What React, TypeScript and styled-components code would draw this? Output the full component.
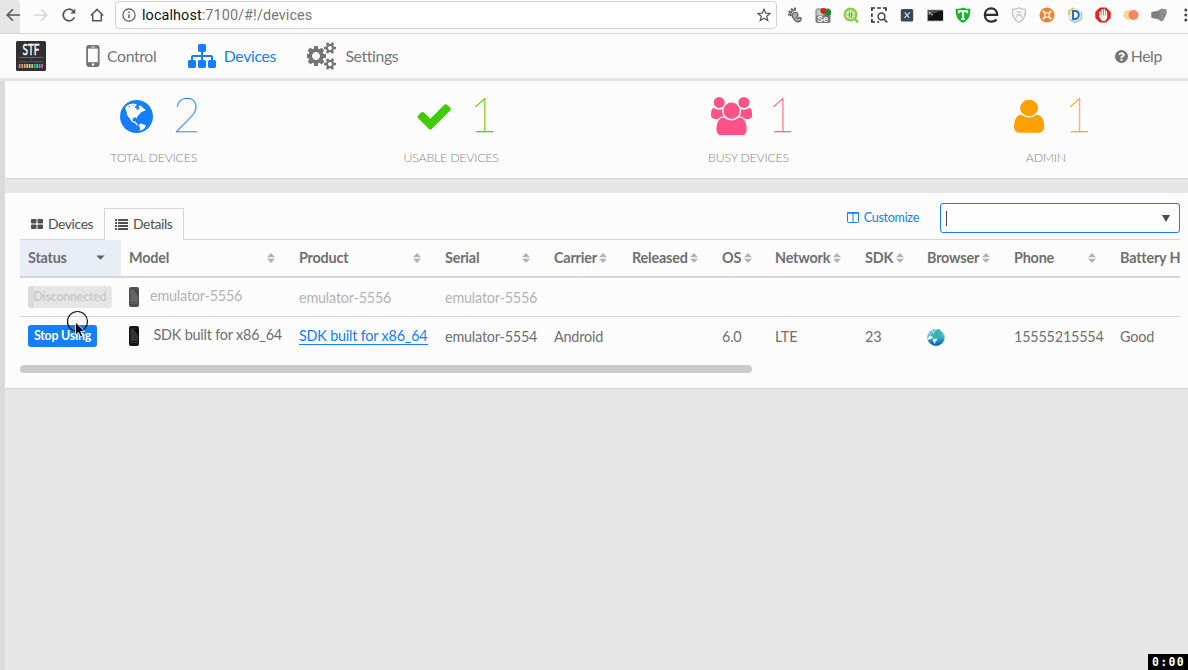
import React from "react";
import styled, { createGlobalStyle } from "styled-components";

const GlobalStyle = createGlobalStyle`
  * { box-sizing: border-box; }
  body { margin: 0; background: #e6e6e6; overflow: hidden; }
  svg { display: block; flex: none; }
`;

const BLUE = "#157efb";

const Page = styled.div`
  position: relative;
  width: 1188px;
  height: 670px;
  overflow: hidden;
  display: flex;
  flex-direction: column;
  background: #e6e6e6;
  color: #6f6f6f;
  font-family: Lato, "Liberation Sans", sans-serif;
  font-size: 14.4px;
`;

/* ---------- browser bar ---------- */
const BrowserBar = styled.div`
  display: flex;
  height: 34px;
  flex: none;
  align-items: flex-start;
  background: #fcfcfc;
  border-bottom: 1px solid #d6d6d6;
`;
const BackButton = styled.div`
  flex: none;
  width: 20px;
  height: 33px;
  padding: 7px 0 0 5px;
  background: #e6e6e6;
  border-top-right-radius: 4px;
  overflow: hidden;
`;
const BarIcon = styled.div<{ $w: number }>`
  flex: none;
  width: ${(p) => p.$w}px;
  padding-top: 7px;
  display: flex;
  justify-content: center;
`;
const AddressField = styled.div`
  flex: none;
  display: flex;
  align-items: center;
  width: 662px;
  height: 28px;
  margin: 1px 9px 0 0;
  padding: 0 5px 0 6px;
  border: 1px solid #d2d2d2;
  border-radius: 4px;
  background: #fff;
  font-family: Roboto, "Liberation Sans", sans-serif;
  font-size: 14.4px;
  color: #767676;
`;
const Url = styled.span`
  flex: 1;
  margin-left: 6px;
  padding-top: 1px;
  letter-spacing: 0.1px;
`;
const Host = styled.span`
  color: #111;
`;
const Extensions = styled.div`
  display: flex;
  flex: none;
  padding-top: 6px;
  gap: 10px;
`;

/* ---------- navigation ---------- */
const NavBar = styled.nav`
  display: flex;
  align-items: center;
  height: 47px;
  flex: none;
  padding: 0 26px 0 16px;
  background: #fcfcfc;
  border-bottom: 3px solid #e4e4e4;
  font-size: 15.8px;
  letter-spacing: -0.36px;
`;
const Logo = styled.div`
  width: 30px;
  height: 30px;
  margin-right: 40px;
`;
const NavItem = styled.a<{ $active?: boolean; $gap: number; $after?: number }>`
  display: flex;
  align-items: center;
  gap: ${(p) => p.$gap}px;
  margin-right: ${(p) => p.$after ?? 0}px;
  color: ${(p) => (p.$active ? BLUE : "#757575")};
`;
const NavText = styled.span`
  padding-bottom: 2px;
`;
const Spacer = styled.div`
  flex: 1;
`;

/* ---------- content ---------- */
const Content = styled.main`
  flex: 1;
  border-left: 5px solid #dadada;
`;
const StatsPanel = styled.section`
  display: flex;
  height: 98px;
  background: #fcfcfc;
  border-bottom: 1px solid #d6d6d6;
`;
const Stat = styled.div`
  width: 297.4px;
  flex: none;
  display: flex;
  flex-direction: column;
  align-items: center;
`;
const StatTop = styled.div<{ $color: string; $gap: number; $shift: number }>`
  display: flex;
  align-items: center;
  height: 70px;
  gap: ${(p) => p.$gap}px;
  margin-left: ${(p) => p.$shift}px;
  color: ${(p) => p.$color};
`;
const StatNumber = styled.span`
  font-size: 48px;
  line-height: 66px;
  height: 70px;
  font-weight: 100;
  -webkit-text-stroke: 0.3px currentColor;
`;
const StatLabel = styled.div`
  font-size: 12.4px;
  letter-spacing: -0.24px;
  line-height: 14px;
  font-weight: 300;
  color: #858585;
`;

const DevicesPanel = styled.section`
  height: 196px;
  margin-top: 14px;
  padding: 10px 8px 0 15px;
  background: #fcfcfc;
  border-bottom: 1px solid #d6d6d6;
`;
const Toolbar = styled.div`
  display: flex;
  height: 37px;
  border-bottom: 1px solid #d6d6d6;
`;
const Tab = styled.div<{ $active?: boolean; $w: number }>`
  display: flex;
  align-items: center;
  gap: 5px;
  width: ${(p) => p.$w}px;
  height: 32px;
  margin-top: 5px;
  padding: 0 0 1px 10px;
  font-size: 13.9px;
  letter-spacing: -0.4px;
  color: #4f4f4f;
  border: ${(p) => (p.$active ? "1px solid #d6d6d6" : "1px solid transparent")};
  border-bottom: none;
  background: ${(p) => (p.$active ? "#fcfcfc" : "transparent")};
`;
const Customize = styled.div`
  display: flex;
  align-items: center;
  gap: 5px;
  height: 29px;
  margin-right: 21px;
  font-size: 12.6px;
  letter-spacing: -0.3px;
  color: ${BLUE};
`;
const Search = styled.div`
  display: flex;
  align-items: center;
  justify-content: space-between;
  width: 240px;
  height: 30px;
  padding: 0 9px 0 5px;
  border: 1px solid ${BLUE};
  border-radius: 3px;
  background: #fdfdfd;
`;
const Caret = styled.span`
  width: 1px;
  height: 15px;
  background: #444;
`;
const Table = styled.table`
  width: 1160px;
  table-layout: fixed;
  border-collapse: separate;
  border-spacing: 0;
  letter-spacing: -0.2px;
`;
const Th = styled.th<{ $sorted?: boolean }>`
  height: 38px;
  padding: 0 0 1px 8px;
  border-bottom: 2px solid #d6d6d6;
  background: ${(p) => (p.$sorted ? "#e9edf6" : "transparent")};
  text-align: left;
  font-weight: 700;
  color: #6f6f6f;
  white-space: nowrap;
`;
const ThInner = styled.div<{ $tight?: boolean }>`
  display: flex;
  align-items: center;
  justify-content: ${(p) => (p.$tight ? "flex-start" : "space-between")};
  gap: 2.5px;
  padding-right: ${(p) => (p.$tight ? 0 : 16)}px;
`;
const Row = styled.tr<{ $muted?: boolean }>`
  color: ${(p) => (p.$muted ? "#b3b3b3" : "#6f6f6f")};
`;
const Td = styled.td<{ $line?: boolean; $lift?: number }>`
  height: 39px;
  padding: 0 0 ${(p) => p.$lift ?? 1}px 8px;
  white-space: nowrap;
  border-bottom: ${(p) => (p.$line ? "1px solid #d6d6d6" : "none")};
`;
const StatusButton = styled.span<{ $muted?: boolean }>`
  display: block;
  width: ${(p) => (p.$muted ? 84 : 69)}px;
  height: 22px;
  line-height: 22px;
  border-radius: 3px;
  text-align: center;
  font-size: 12.4px;
  letter-spacing: -0.22px;
  font-weight: 700;
  color: ${(p) => (p.$muted ? "#cbcbcb" : "#fff")};
  background: ${(p) => (p.$muted ? "linear-gradient(90deg, #dadada 6px, #e6e6e6 6px)" : BLUE)};
`;
const ModelCell = styled.div<{ $gap: number }>`
  display: flex;
  align-items: center;
  gap: ${(p) => p.$gap}px;
`;
const ModelName = styled.span`
  padding-bottom: 3px;
`;
const ProductLink = styled.a`
  display: inline-block;
  line-height: 16px;
  color: ${BLUE};
  border-bottom: 1px solid ${BLUE};
`;
const ScrollThumb = styled.div`
  width: 732px;
  height: 8px;
  margin-top: 9px;
  border-radius: 4px;
  background: #cbcbcb;
`;
const Timer = styled.div`
  position: absolute;
  right: 0;
  bottom: 0;
  width: 40px;
  height: 16px;
  background: #000;
  color: #fff;
  font: 700 11.5px/16px "DejaVu Sans Mono", monospace;
  letter-spacing: 1.3px;
  padding-left: 4px;
`;
const Pointer = styled.div`
  position: absolute;
  left: 66px;
  top: 310px;
`;

/* ---------- icons ---------- */
const FaIcon = ({ d, h, w = 1792, stretch = 1 }: { d: string; h: number; w?: number; stretch?: number }) => (
  <svg width={((h * w) / 1792) * stretch} height={h} viewBox={`0 0 ${w} 1792`} preserveAspectRatio="none" fill="currentColor">
    <path d={d} />
  </svg>
);

const SITEMAP =
  "M1792 1248v320q0 40-28 68t-68 28h-320q-40 0-68-28t-28-68v-320q0-40 28-68t68-28h96v-192h-512v192h96q40 0 68 28t28 68v320q0 40-28 68t-68 28h-320q-40 0-68-28t-28-68v-320q0-40 28-68t68-28h96v-192h-512v192h96q40 0 68 28t28 68v320q0 40-28 68t-68 28h-320q-40 0-68-28t-28-68v-320q0-40 28-68t68-28h96v-192q0-52 38-90t90-38h512v-192h-96q-40 0-68-28t-28-68v-320q0-40 28-68t68-28h320q40 0 68 28t28 68v320q0 40-28 68t-68 28h-96v192h512q52 0 90 38t38 90v192h96q40 0 68 28t28 68z";
const CHECK =
  "M1671 566q0 40-28 68l-724 724-136 136q-28 28-68 28t-68-28l-136-136-362-362q-28-28-28-68t28-68l136-136q28-28 68-28t68 28l294 295 656-657q28-28 68-28t68 28l136 136q28 28 28 68z";
const USER =
  "M1536 1399q0 109-62.5 187t-150.5 78h-854q-88 0-150.5-78t-62.5-187q0-85 8.5-160.5t31.5-152 58.5-131 94-89 134.5-34.5q131 128 313 128t313-128q76 0 134.5 34.5t94 89 58.5 131 31.5 152 8.5 160.5zm-256-887q0 159-112.5 271.5t-271.5 112.5-271.5-112.5-112.5-271.5 112.5-271.5 271.5-112.5 271.5 112.5 112.5 271.5z";
const USERS =
  "M593 896q-162 5-265 128H194q-82 0-138-40.5T0 865q0-353 124-353 6 0 43.5 21t97.5 42.5T384 597q67 0 133-23-5 37-5 66 0 139 81 256zm1071 637q0 120-73 189.5t-194 69.5H523q-121 0-194-69.5T256 1533q0-53 3.5-103.5t14-109T300 1212t43-97.5 62-81 85.5-53.5T602 960q10 0 43 21.5t73 48 107 48 135 21.5 135-21.5 107-48 73-48 43-21.5q61 0 111.5 20t85.5 53.5 62 81 43 97.5 26.5 108.5 14 109 3.5 103.5zM640 256q0 106-75 181t-181 75-181-75-75-181 75-181T384 0t181 75 75 181zm704 384q0 159-112.5 271.5T960 1024 688.5 911.5 576 640t112.5-271.5T960 256t271.5 112.5T1344 640zm576 225q0 78-56 118.5t-138 40.5h-134q-103-123-265-128 81-117 81-256 0-29-5-66 66 23 133 23 59 0 119-21.5t97.5-42.5 43.5-21q124 0 124 353zm-128-609q0 106-75 181t-181 75-181-75-75-181 75-181 181-75 181 75 75 181z";
const HELP =
  "M1024 1376v-192q0-14-9-23t-23-9h-192q-14 0-23 9t-9 23v192q0 14 9 23t23 9h192q14 0 23-9t9-23zm256-672q0-88-55.5-163t-138.5-116-170-41q-243 0-371 213-15 24 8 42l132 100q7 6 19 6 16 0 25-12 53-68 86-92 34-24 86-24 48 0 85.5 26t37.5 59q0 38-20 61t-68 45q-63 28-115.5 86.5t-52.5 125.5v36q0 14 9 23t23 9h192q14 0 23-9t9-23q0-19 21.5-49.5t54.5-49.5q32-18 49-28.5t46-35 44.5-48 28-60.5 12.5-81zm384 192q0 209-103 385.5t-279.5 279.5-385.5 103-385.5-103-279.5-279.5-103-385.5 103-385.5 279.5-279.5 385.5-103 385.5 103 279.5 279.5 103 385.5z";
const COGS =
  "M832 896q0-106-75-181t-181-75-181 75-75 181 75 181 181 75 181-75 75-181zm768 512q0-52-38-90t-90-38-90 38-38 90q0 53 37.5 90.5t90.5 37.5 90.5-37.5 37.5-90.5zm0-1024q0-52-38-90t-90-38-90 38-38 90q0 53 37.5 90.5t90.5 37.5 90.5-37.5 37.5-90.5zm-384 421v185q0 10-7 19.5t-16 10.5l-155 24q-11 35-32 76 34 48 90 115 7 11 7 20 0 12-7 19-23 30-82.5 89.5t-78.5 59.5q-11 0-21-7l-115-90q-37 19-77 31-11 108-23 155-7 24-30 24h-186q-11 0-20-7.5t-10-17.5l-23-153q-34-10-75-31l-118 89q-7 7-20 7-11 0-21-8-144-133-144-160 0-9 7-19 10-14 41-53t47-61q-23-44-35-82l-152-24q-10-1-17-9.5t-7-19.5v-185q0-10 7-19.5t16-10.5l155-24q11-35 32-76-34-48-90-115-7-11-7-20 0-12 7-20 22-30 82-89t79-59q11 0 21 7l115 90q34-18 77-32 11-108 23-154 7-24 30-24h186q11 0 20 7.5t10 17.5l23 153q34 10 75 31l118-89q8-7 20-7 11 0 21 8 144 133 144 160 0 8-7 19-12 16-42 54t-45 60q23 48 34 82l152 23q10 2 17 10.5t7 19.5zm640 533v140q0 16-149 31-12 27-30 52 51 113 51 138 0 4-4 7-122 71-124 71-8 0-46-47t-52-68q-20 2-30 2t-30-2q-14 21-52 68t-46 47q-2 0-124-71-4-3-4-7 0-25 51-138-18-25-30-52-149-15-149-31v-140q0-16 149-31 13-29 30-52-51-113-51-138 0-4 4-7 4-2 35-20t59-34 30-16q8 0 46 46.5t52 67.5q20-2 30-2t30 2q51-71 92-112l6-2q4 0 124 70 4 3 4 7 0 25-51 138 17 23 30 52 149 15 149 31zm0-1024v140q0 16-149 31-12 27-30 52 51 113 51 138 0 4-4 7-122 71-124 71-8 0-46-47t-52-68q-20 2-30 2t-30-2q-14 21-52 68t-46 47q-2 0-124-71-4-3-4-7 0-25 51-138-18-25-30-52-149-15-149-31v-140q0-16 149-31 13-29 30-52-51-113-51-138 0-4 4-7 4-2 35-20t59-34 30-16q8 0 46 46.5t52 67.5q20-2 30-2t30 2q51-71 92-112l6-2q4 0 124 70 4 3 4 7 0 25-51 138 17 23 30 52 149 15 149 31z";

const GlobeIcon = () => (
  <svg width="33" height="33" viewBox="0 0 33 33">
    <circle cx="16.5" cy="16.5" r="16.5" fill={BLUE} />
    <path
      fill="#fcfcfc"
      d="M5 7.800 7 5.600 9.500 4.300 13 3.500l3 .4 1 1.300-1.700.8-.3 1.700 1.500.9 1 1.600 1.200-1 .4-1.600-.5-1.700 2-.4 1.700 1.800 1.500 1.300 1.700 1.200-.4 1-2.300.6-1.900 1-1.300 1.700-1.500 1.400-.9 1.600-.4 1.500-1-1.100-1.900.1-1.300 1.300.1 2 1.200.8 1.500-.9.1 1.600 1.500.6.4 1.700 1.200.4-.4.700-2.100-1-1.300-1.700-2.300-.8-1.700-1.700-.8-1.900-1.600-1.600-1.300-2.400-.4-2.600z"
    />
    <path fill={BLUE} d="m8.500 6.500 1.300-.4.4.7-1.300.5zM12.600 5.400l1-.4.3.8-.9.300zM18.800 19l1.700.3 1.100.8-.5.2-1.400-.6z" />
    <path fill="#fcfcfc" d="m19.300 24 1.800-.4 1.700.6 2.400.8.600 1.200-1.500 2.300-2.300 1.400-2.400.9.500-2.700-.9-1.600z" />
  </svg>
);

const PhoneNav = () => (
  <svg width="14" height="22" viewBox="0 0 14 22">
    <rect x=".2" y="0" width="13.4" height="22" rx="2.4" fill="#757575" />
    <rect x="2" y="3.6" width="9.8" height="13.6" fill="#fcfcfc" />
    <rect x="5" y="1.5" width="4" height="1" fill="#e0e0e0" />
    <circle cx="7" cy="19.5" r="1.2" fill="#fcfcfc" />
  </svg>
);

const BARS = ["#d97f72", "#e08d75", "#e0b07a", "#d8cf72", "#e8d86c", "#b7cf72", "#5fae84", "#58c0cf", "#5a9fe8", "#e2539a"];
const StfLogo = () => (
  <svg width="30" height="30" viewBox="0 0 30 30">
    <rect width="30" height="30" rx="1.5" fill="#303030" />
    <text x="15" y="13.900" textAnchor="middle" fontFamily="Lato, sans-serif" fontSize="14.500" letterSpacing="0" fontWeight="400" stroke="#fff" strokeWidth=".4" fill="#fff" textLength="17" lengthAdjust="spacingAndGlyphs">
      STF
    </text>
    <path d="M3 16.500h24" stroke="#777" strokeWidth=".8" />
    <path d="M15 16.500v4M3.500 22v-1.500h23V22M6 20.500V22M8.500 20.500V22M11 20.500V22M19 20.500V22M21.500 20.500V22M24 20.500V22" stroke="#5a5a5a" strokeWidth=".7" fill="none" />
    {BARS.map((c, i) => (
      <rect key={c} x={2.8 + i * 2.5} y="23" width="1.7" height="4" fill={c} />
    ))}
  </svg>
);

const SortIcon = () => (
  <svg width="8" height="10" viewBox="0 0 8 10">
    <path d="M4 0 8 4.200H0zM0 5.800h8L4 10z" fill="#b2b2b2" />
  </svg>
);
const SortDown = () => (
  <svg width="9" height="5" viewBox="0 0 9 5">
    <path d="M.3.500h8.200L4.400 4.800z" fill="#4f6060" />
  </svg>
);
const Handset = ({ dim }: { dim?: boolean }) => (
  <svg width="10" height="20" viewBox="0 0 10 20" opacity={dim ? 0.75 : 1}>
    <rect width="10" height="20" rx="2" fill="#151515" />
    <rect x="1.500" y="2.500" width="7.500" height="12.500" fill="#333" />
    <path d="M5 3h4v7z" fill="#0a0a0a" />
    <path d="M2 16.500h2M5.500 16.500h3" stroke="#444" />
  </svg>
);
const BrowserGlobe = () => (
  <svg width="18" height="18" viewBox="0 0 18 18">
    <defs>
      <linearGradient id="sea" x1="0" y1="0" x2="0" y2="1">
        <stop offset="0" stopColor="#e2f6f9" />
        <stop offset=".5" stopColor="#35b3cf" />
        <stop offset="1" stopColor="#0b5b9c" />
      </linearGradient>
    </defs>
    <circle cx="9" cy="9.200" r="8.700" fill="url(#sea)" />
    <path d="M7.500 4 9 2l3.500-1 .8 2.500 2 1L15 8l-2 2-3-.500L8 10 5.500 8z" fill="#36b3ac" />
    <path d="m.6 9.500 3-2 2.400 2L4 11 1.200 12zM5.500 11l4-.5 1 1.500-2 1.500-.5 2.500L6.500 14z" fill="#e4f2fb" />
    <path d="M3 3.800h1.500M6 2h1.500M4.500 6h1.500" stroke="#23799f" />
  </svg>
);

const Svg = ({ children }: { children: React.ReactNode }) => (
  <svg width="18" height="18" viewBox="0 0 18 18" fill="none">
    {children}
  </svg>
);

const ExtensionIcons = () => (
  <Extensions>
    <Svg>
      <path d="M8.500 6.500c-2.500.8-3.300 3.200-1.600 5 1.500 1.400 1.400 3.700 3.800 4.300 2.300.5 4.600-.8 4.600-2.700 0-1.800-2.200-2.300-2.900-1.100-.4.700-1.300.6-1.500 0-.4-.9 1.100-1.700 1.100-3.500 0-1.700-1.600-2.600-3.500-2z" stroke="#555" strokeWidth="1.100" fill="#aaa" />
      <path d="M3 8.500l1.600.3M3.500 5.700l1.700.7M5.800 3.400l1 1.300M9 2.500v1.200" stroke="#444" strokeWidth="2.200" strokeLinecap="round" />
      <path d="M3.200 8.500l1 .2M3.900 5.900l.9.300M6 3.700l.6.8M9 2.600v.7" stroke="#bbb" strokeWidth=".8" strokeLinecap="round" />
    </Svg>
    <Svg>
      <rect x="1.500" y="2.500" width="15" height="14.500" rx="2" fill="#777" />
      <rect x="2.500" y="3.500" width="7" height="6" fill="#c9c9c9" />
      <circle cx="9.500" cy="5" r="3" fill="#d62222" />
      <circle cx="14.200" cy="6.500" r="3" fill="#19882d" />
      <text x="3" y="15.500" fontFamily="Liberation Sans, sans-serif" fontSize="9" fontWeight="700" fill="#fff">Se</text>
    </Svg>
    <Svg>
      <circle cx="8.500" cy="8.500" r="6" fill="#b7dd85" stroke="#8ccb45" strokeWidth="2" />
      <path d="m13 13 3 3.500" stroke="#8ccb45" strokeWidth="2.600" />
      <ellipse cx="8.500" cy="8.800" rx="2.500" ry="3.500" fill="#5da520" stroke="#fff" strokeWidth=".8" />
      <path d="M8.500 5.500v6M4.500 7h1.500M4.500 10.500h1.500M11 7h1.500M11 10.500h1.500" stroke="#fff" strokeWidth=".8" />
    </Svg>
    <Svg>
      <path d="M1.900 5V2H5M7.200 2h3.600M13 2h3v3M1.900 7.500v3.200M1.900 13v3H5M7.200 16h2" stroke="#333" strokeWidth="1.700" />
      <circle cx="11.500" cy="10.500" r="3.400" stroke="#444" strokeWidth="1.500" />
      <path d="m14 13 3.200 3.500" stroke="#444" strokeWidth="1.800" />
    </Svg>
    <Svg>
      <rect x="2.800" y="3" width="12.400" height="12.400" rx="1.500" fill="#34495a" />
      <path d="m6.800 6.400 4.400 5.500M11.900 6.400l-5.500 5.500" stroke="#e0e4e8" strokeWidth="1.100" />
    </Svg>
    <Svg>
      <path d="M1.500 4h15.500v11H1.500z" fill="#222" stroke="#aaa" strokeWidth=".7" />
      <path d="M9 7.500 17 5v9H2.500z" fill="#111" />
      <path d="M2 9l14-5H2z" fill="#555" />
      <path d="m3 6 1.500 1L3 8M5 8.700h2" stroke="#eee" strokeWidth=".8" />
    </Svg>
    <Svg>
      <path d="M1.700 2.800C5 3 7 2.500 9 1.500c2 1 4 1.500 7.300 1.300.3 7-1.600 11.500-7.300 14.200C3.300 14.300 1.400 9.800 1.700 2.800z" fill="#16b52c" />
      <path d="M4.800 7.200V5.300h8.400v1.900M9 5.500v7.500M7.300 13h3.400" stroke="#fff" strokeWidth="1.900" />
    </Svg>
    <Svg>
      <path d="M2.500 8.800h12.600C15.100 5 12.800 2.400 9.200 2.400S2.900 5.200 2.900 9s2.600 6.700 6.500 6.700c2 0 3.800-.7 5.200-2" stroke="#2d2d2d" strokeWidth="2.300" />
    </Svg>
    <Svg>
      <path d="M2.500 3.500C5.500 3.500 7 3 9 1.800c2 1.200 3.500 1.700 6.500 1.700.3 6.500-1.500 10.500-6.500 13-5-2.500-6.800-6.500-6.500-13z" stroke="#c8c8c8" strokeWidth="1.500" />
      <path d="M5.500 6h7M9 5v3l-3 4M6 9h6M9 8l3.500 4" stroke="#c8c8c8" strokeWidth="1.100" />
    </Svg>
    <Svg>
      <circle cx="9" cy="9" r="7.500" fill="#f58230" />
      <circle cx="9" cy="9" r="2.300" stroke="#fff" strokeWidth="1.100" />
      <path d="m4.900 4.900 2.200 2.200M13.100 4.900l-2.200 2.200M4.900 13.100l2.200-2.200M13.100 13.100l-2.200-2.200" stroke="#fff" strokeWidth="2" />
    </Svg>
    <Svg>
      <path d="M2 9V5l7-3.500L16 5v8l-7 4-7-4z" fill="#e4edf1" />
      <path d="M3 9V5l5-3" stroke="#ecbd58" strokeWidth="1.500" />
      <path d="M4 14l5 2.500L15.500 13V6" stroke="#a8c9dc" strokeWidth="1.500" />
      <path d="M7 5h2c5 0 5 8 0 8H7z" stroke="#246cae" strokeWidth="1.900" fill="#fff" />
    </Svg>
    <Svg>
      <path d="M5.800 1.500h6.400l4.500 4.500v6l-4.500 4.500H5.800L1.300 12V6z" fill="#dc2721" />
      <path d="M6 6v5M8.200 4v6M10.400 3.500v7M12.400 5.500v6" stroke="#fff" strokeWidth="1.500" strokeLinecap="round" />
      <path d="M5.300 9.500h7.900c0 4-1.500 5.500-3.700 5.500S6 13 5.300 9.500z" fill="#fff" />
    </Svg>
    <Svg>
      <circle cx="6.300" cy="9" r="5" fill="#fbd99a" />
      <circle cx="11.500" cy="9" r="5" fill="#f67b52" opacity=".9" />
    </Svg>
    <Svg>
      <path d="m7.500 4.700 4-2.200 5 .7.2 4.300-3 6.500-2.500 1.500-3.200-2.300-6.700-1.500V6z" fill="#8d8d8d" />
      <path d="M2 6.800h8M1.500 9h8M2 11.200h7" stroke="#6a6a6a" strokeWidth=".9" />
    </Svg>
    <Svg>
      <circle cx="7.800" cy="4" r="1.500" fill="#444" />
      <circle cx="7.800" cy="9" r="1.500" fill="#444" />
      <circle cx="7.800" cy="14" r="1.500" fill="#444" />
    </Svg>
  </Extensions>
);

/* ---------- data ---------- */
const COLUMNS = [
  { name: "Status", w: 101 },
  { name: "Model", w: 170 },
  { name: "Product", w: 146 },
  { name: "Serial", w: 109 },
  { name: "Carrier", w: 78, tight: true },
  { name: "Released", w: 90, tight: true },
  { name: "OS", w: 53, tight: true },
  { name: "Network", w: 90, tight: true },
  { name: "SDK", w: 62, tight: true },
  { name: "Browser", w: 87, tight: true },
  { name: "Phone", w: 106 },
  { name: "Battery H", w: 68, plain: true },
];

export default function App() {
  return (
    <Page>
      <GlobalStyle />
      <BrowserBar>
        <BackButton>
          <svg width="16" height="16" viewBox="0 0 16 16" fill="none" stroke="#555" strokeWidth="1.600">
            <path d="M15 8H2.500M8 2.200 2.200 8 8 13.800" />
          </svg>
        </BackButton>
        <BarIcon $w={41}>
          <svg width="16" height="16" viewBox="0 0 16 16" fill="none" stroke="#d6d6d6" strokeWidth="1.600">
            <path d="M1 8h12.500M8 2.200 13.800 8 8 13.800" />
          </svg>
        </BarIcon>
        <BarIcon $w={16}>
          <svg width="16" height="16" viewBox="0 0 16 16" fill="none" stroke="#555" strokeWidth="1.700">
            <path d="M13.400 10.200A5.800 5.800 0 1 1 12 3.800" />
            <path d="M14.300 1.500v5H9.200z" fill="#555" stroke="none" />
          </svg>
        </BarIcon>
        <BarIcon $w={38}>
          <svg width="18" height="16" viewBox="-1 0 18 16" fill="none" stroke="#555" strokeWidth="1.500">
            <path d="M2.800 8.500 9 2.400l6.200 6.100M4.700 7.500v6.300h8.600V7.500" />
          </svg>
        </BarIcon>
        <AddressField>
          <svg width="14" height="14" viewBox="0 0 14 14" fill="none" stroke="#555" strokeWidth="1.200">
            <circle cx="7" cy="7" r="6.100" />
            <path d="M7 6.200v4M7 3.500v1.400" strokeWidth="1.400" />
          </svg>
          <Url>
            <Host>localhost</Host>:7100/#!/devices
          </Url>
          <svg width="14" height="14" viewBox="0 0 14 14" fill="none" stroke="#555" strokeWidth="1.200">
            <path d="m7 1.200 1.700 4 4.300.3-3.300 2.800 1.100 4.200L7 10.200l-3.800 2.300 1.100-4.200L1 5.500l4.300-.3z" />
          </svg>
        </AddressField>
        <ExtensionIcons />
      </BrowserBar>

      <NavBar>
        <Logo>
          <StfLogo />
        </Logo>
        <NavItem $gap={7} $after={31.500}>
          <PhoneNav />
          <NavText>Control</NavText>
        </NavItem>
        <NavItem $gap={8} $after={31.500} $active>
          <FaIcon d={SITEMAP} h={28} />
          <NavText>Devices</NavText>
        </NavItem>
        <NavItem $gap={8}>
          <FaIcon d={COGS} h={28} w={1920} />
          <NavText>Settings</NavText>
        </NavItem>
        <Spacer />
        <NavItem $gap={2}>
          <FaIcon d={HELP} h={15} />
          <NavText>Help</NavText>
        </NavItem>
      </NavBar>

      <Content>
        <StatsPanel>
          <Stat>
            <StatTop $color={BLUE} $gap={20} $shift={13}>
              <GlobeIcon />
              <StatNumber>2</StatNumber>
            </StatTop>
            <StatLabel>TOTAL DEVICES</StatLabel>
          </Stat>
          <Stat>
            <StatTop $color="#41cc00" $gap={16.500} $shift={10}>
              <FaIcon d={CHECK} h={38.400} />
              <StatNumber>1</StatNumber>
            </StatTop>
            <StatLabel>USABLE DEVICES</StatLabel>
          </Stat>
          <Stat>
            <StatTop $color="#ff5288" $gap={15} $shift={10}>
              <FaIcon d={USERS} h={38.400} w={1920} />
              <StatNumber>1</StatNumber>
            </StatTop>
            <StatLabel>BUSY DEVICES</StatLabel>
          </Stat>
          <Stat>
            <StatTop $color="#ffa001" $gap={14} $shift={9}>
              <FaIcon d={USER} h={38.400} stretch={1.1} />
              <StatNumber>1</StatNumber>
            </StatTop>
            <StatLabel>ADMIN</StatLabel>
          </Stat>
        </StatsPanel>

        <DevicesPanel>
          <Toolbar>
            <Tab $w={84}>
              <svg width="12" height="10" viewBox="0 0 12 10" fill="currentColor">
                <rect width="5.500" height="4.500" rx=".8" />
                <rect x="6.500" width="5.500" height="4.500" rx=".8" />
                <rect y="5.500" width="5.500" height="4.500" rx=".8" />
                <rect x="6.500" y="5.500" width="5.500" height="4.500" rx=".8" />
              </svg>
              <NavText>Devices</NavText>
            </Tab>
            <Tab $w={80} $active>
              <svg width="13" height="11" viewBox="0 0 13 11" fill="currentColor">
                <path d="M0 0h2v2H0zM3 0h10v2H3zM0 3h2v2H0zM3 3h10v2H3zM0 6h2v2H0zM3 6h10v2H3zM0 9h2v2H0zM3 9h10v2H3z" />
              </svg>
              <NavText>Details</NavText>
            </Tab>
            <Spacer />
            <Customize>
              <svg width="12" height="11" viewBox="0 0 12 11" fill="none" stroke="currentColor">
                <rect x=".5" y=".5" width="11" height="10" rx=".8" />
                <path d="M0 1h12" strokeWidth="1.500" />
                <path d="M6 1v10" />
              </svg>
              Customize
            </Customize>
            <Search>
              <Caret />
              <svg width="8" height="7" viewBox="0 0 8 7">
                <path d="M0 0h8L4 7z" fill="#4a4a4a" />
              </svg>
            </Search>
          </Toolbar>
          <Table>
            <colgroup>
              {COLUMNS.map((c) => (
                <col key={c.name} width={c.w} />
              ))}
            </colgroup>
            <thead>
              <tr>
                {COLUMNS.map((c) => (
                  <Th key={c.name} $sorted={c.name === "Status"}>
                    <ThInner $tight={c.tight || c.plain}>
                      {c.name}
                      {!c.plain && (c.name === "Status" ? <SortDown /> : <SortIcon />)}
                    </ThInner>
                  </Th>
                ))}
              </tr>
            </thead>
            <tbody>
              <Row $muted>
                <Td $line $lift={0}>
                  <StatusButton $muted>Disconnected</StatusButton>
                </Td>
                <Td $line $lift={0}>
                  <ModelCell $gap={11}>
                    <Handset dim />
                    <ModelName>emulator-5556</ModelName>
                  </ModelCell>
                </Td>
                <Td $line $lift={0}>emulator-5556</Td>
                <Td $line $lift={0}>emulator-5556</Td>
                <Td $line colSpan={8} />
              </Row>
              <Row>
                <Td $lift={2}>
                  <StatusButton>Stop Using</StatusButton>
                </Td>
                <Td>
                  <ModelCell $gap={14.500}>
                    <Handset />
                    <ModelName>SDK built for x86_64</ModelName>
                  </ModelCell>
                </Td>
                <Td>
                  <ProductLink>SDK built for x86_64</ProductLink>
                </Td>
                <Td>emulator-5554</Td>
                <Td>Android</Td>
                <Td />
                <Td>6.0</Td>
                <Td>LTE</Td>
                <Td>23</Td>
                <Td $lift={0}>
                  <BrowserGlobe />
                </Td>
                <Td>15555215554</Td>
                <Td>Good</Td>
              </Row>
            </tbody>
          </Table>
          <ScrollThumb />
        </DevicesPanel>
      </Content>

      <Pointer>
        <svg width="24" height="30" viewBox="0 0 24 30">
          <circle cx="11.500" cy="11.500" r="10" fill="none" stroke="#111" strokeWidth="1.200" />
          <path d="M9.500 12v13l3-2.600 2 4.600 2.200-1-2-4.500h4z" fill="#0a0a0a" stroke="#fff" strokeWidth=".8" />
        </svg>
      </Pointer>
      <Timer>0:00</Timer>
    </Page>
  );
}
